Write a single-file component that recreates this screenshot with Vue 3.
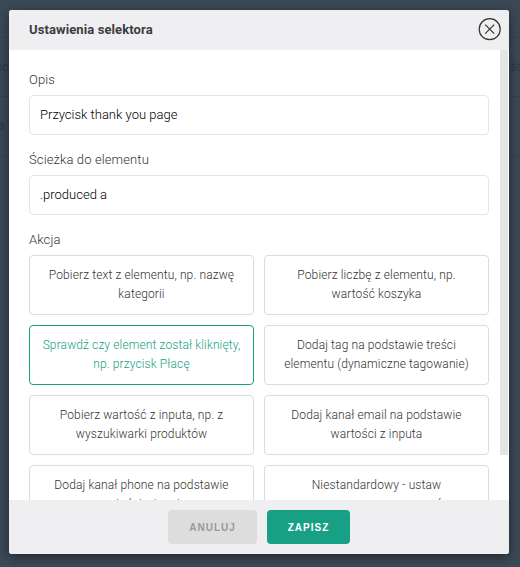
<script setup>
const fields = [
  { label: 'Opis', value: 'Przycisk thank you page' },
  { label: 'Ścieżka do elementu', value: '.produced a' },
]
const actions = [
  ['Pobierz text z elementu, np. nazwę', 'kategorii'],
  ['Pobierz liczbę z elementu, np.', 'wartość koszyka'],
  ['Sprawdź czy element został kliknięty,', 'np. przycisk Płacę'],
  ['Dodaj tag na podstawie treści', 'elementu (dynamiczne tagowanie)'],
  ['Pobierz wartość z inputa, np. z', 'wyszukiwarki produktów'],
  ['Dodaj kanał email na podstawie', 'wartości z inputa'],
  ['Dodaj kanał phone na podstawie', 'wartości z inputa'],
  ['Niestandardowy - ustaw', 'samemu nazwę oraz wzór'],
]
const selected = 2
</script>

<template>
  <main class="backdrop">
    <span class="ghost ghost-left">sc</span>
    <span class="ghost ghost-right">ść</span>
    <span class="ghost ghost-low">a</span>
    <i class="rule rule-top"></i>
    <i class="rule rule-middle"></i>
    <i class="rule rule-bottom"></i>
    <section class="modal">
      <header>
        <h1>Ustawienia selektora</h1>
        <svg class="close" viewBox="0 0 24 24">
          <circle cx="11.7" cy="11.2" r="10.5" />
          <path d="M7.2 6.7l9 9M16.2 6.7l-9 9" />
        </svg>
      </header>
      <div class="body">
        <div class="content">
          <div v-for="f in fields" :key="f.label" class="field">
            <label>{{ f.label }}</label>
            <div class="input">{{ f.value }}</div>
          </div>
          <label>Akcja</label>
          <div class="grid">
            <div v-for="(a, i) in actions" :key="i" class="card" :class="{ active: i === selected }">
              {{ a[0] }}<br />{{ a[1] }}
            </div>
          </div>
        </div>
        <div class="track"><div class="thumb"></div></div>
      </div>
      <footer>
        <button class="cancel">ANULUJ</button>
        <button class="save">ZAPISZ</button>
      </footer>
    </section>
  </main>
</template>

<style>
body { margin: 0; overflow: hidden; }
</style>

<style scoped>
* { box-sizing: border-box; }
.backdrop {
  position: relative;
  width: 520px;
  height: 567px;
  padding: 10px 11px 13px 9px;
  overflow: hidden;
  background: #3b4856;
  font-family: Roboto, sans-serif;
}
.ghost { position: absolute; color: #2d3844; font-size: 13px; line-height: 16px; font-weight: 400; }
.ghost-left { left: -5px; top: 59px; }
.ghost-right { left: 510px; top: 59px; }
.ghost-low { left: -2px; top: 118px; }
.rule { position: absolute; left: 0; width: 520px; height: 1px; background: #364350; }
.rule-top { top: 37px; }
.rule-middle { top: 96px; }
.rule-bottom { top: 155px; }
.modal {
  position: relative;
  display: flex;
  flex-direction: column;
  width: 500px;
  height: 544px;
  overflow: hidden;
  border-radius: 3px;
  background: #fff;
  box-shadow: 0 3px 12px rgba(0, 0, 0, 0.45);
}
header {
  display: flex;
  flex: none;
  align-items: center;
  justify-content: space-between;
  height: 40px;
  padding: 0 7px 0 20px;
  background: #efeff1;
}
h1 { margin: 0; font-size: 13px; line-height: 20px; font-weight: 700; letter-spacing: 0.1px; color: #3c3c3e; }
.close { width: 24px; height: 24px; fill: none; stroke: #333; stroke-width: 1.2; }
.body { display: flex; flex: none; height: 450px; overflow: hidden; }
.content { width: 491px; padding: 20px 11px 0 20px; }
.field { margin-bottom: 15px; }
label {
  display: block;
  height: 25px;
  font-size: 13px;
  line-height: 20px;
  font-weight: 300;
  letter-spacing: 0.12px;
  color: #333;
}
.input {
  height: 40px;
  padding: 0 10px;
  border: 1px solid #e5e5e5;
  border-radius: 4px;
  font-size: 13px;
  line-height: 37px;
  font-weight: 300;
  color: #000;
}
.grid { display: grid; grid-template-columns: 225px 225px; grid-auto-rows: 60px; gap: 10px; }
.card {
  padding-top: 10px;
  border: 1px solid #dcdcdc;
  border-radius: 4px;
  font-size: 12px;
  line-height: 19px;
  font-weight: 300;
  letter-spacing: 0.12px;
  text-align: center;
  white-space: nowrap;
  color: #333;
}
.card.active { border-color: #18a085; color: #18a085; }
.track { width: 8px; }
.thumb { height: 405px; background: #e5e5e5; }
footer {
  display: flex;
  flex: 1;
  justify-content: center;
  gap: 10px;
  padding-top: 10px;
  background: #efeff1;
}
button {
  height: 34px;
  padding: 0;
  border: 0;
  border-radius: 4px;
  font-family: "Liberation Sans", sans-serif;
  font-size: 10px;
  font-weight: 700;
  letter-spacing: 1px;
}
.cancel { width: 89px; background: #ddd; color: #999; }
.save { width: 83px; background: #18a085; color: #fff; }
</style>
